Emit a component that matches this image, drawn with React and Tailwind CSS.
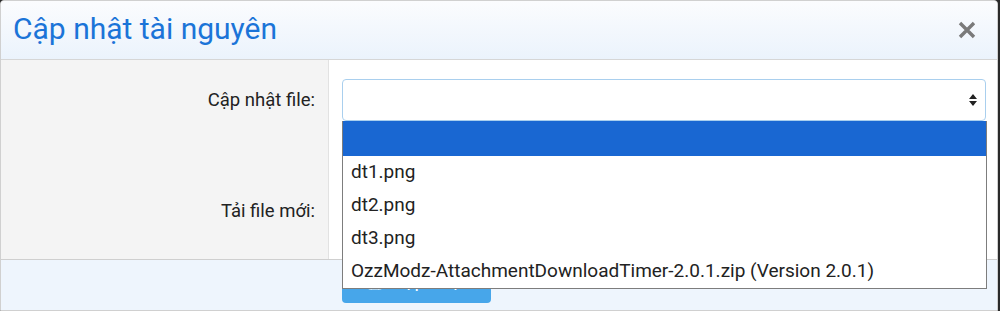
import { Save } from 'lucide-react'

const options = [
  { label: '', active: true },
  { label: 'dt1.png' },
  { label: 'dt2.png' },
  { label: 'dt3.png' },
  { label: 'OzzModz-AttachmentDownloadTimer-2.0.1.zip (Version 2.0.1)' },
]

export default function App() {
  return (
    <div className="w-[1000px] h-[311px] bg-[#2a2a2a] font-['Roboto','Liberation_Sans',sans-serif] text-[#222]">
      <div className="h-full mr-[2px] rounded-t-[4px] border border-[#d0d0d0] bg-white flex flex-col overflow-hidden">
        {/* Header */}
        <div className="h-[59px] shrink-0 flex items-center justify-between pl-[12px] pr-[20px] border-b border-[#d6d6d6] bg-gradient-to-b from-[#fbfcfe] to-[#ebf3fc]">
          <h2 className="text-[30px] text-[#1b74d8] leading-none pb-[2px]">Cập nhật tài nguyên</h2>
          <button className="text-[#7a7a7a]">
            <svg width="20" height="20" viewBox="0 0 20 20">
              <path d="M3 3 L17 17 M17 3 L3 17" stroke="currentColor" strokeWidth="3.4" strokeLinecap="butt" />
            </svg>
          </button>
        </div>

        {/* Body */}
        <div className="flex-1 flex">
          <div className="w-[328px] shrink-0 bg-[#f4f4f4] border-r border-[#e2e2e2] flex flex-col pr-[13px] text-[18.5px] text-right">
            <div className="h-[80px] pt-[27px]">Cập nhật file:</div>
            <div className="pt-[58px]">Tải file mới:</div>
          </div>
          <div className="flex-1 pl-[13px] pr-[11px] pt-[19px]">
            <div className="relative">
              <div className="h-[42px] rounded-[4px] border border-[#a9cfee] bg-white flex items-center justify-end pr-[7px]">
                <svg width="10" height="14" viewBox="0 0 10 14">
                  <path d="M5 1 L9 6 L1 6 Z M1 8 L9 8 L5 13 Z" fill="#222" />
                </svg>
              </div>
              <div className="absolute left-0 right-[-1px] top-[42px] z-10 bg-white border border-[#7d7d7d] border-t-0">
                {options.map((o, i) => (
                  <div
                    key={i}
                    className={`flex items-center pl-[8px] text-[19px] ${o.active ? 'h-[35px] bg-[#1967d2] text-white' : 'h-[33px] text-[#222]'}`}
                  >
                    {o.label}
                  </div>
                ))}
              </div>
            </div>
          </div>
        </div>

        {/* Footer */}
        <div className="h-[51px] shrink-0 border-t border-[#cfcfcf] bg-[#eef5fd] pl-[341px] pt-[6px]">
          <button className="h-[37px] w-[149px] rounded-[4px] bg-[#47a6ea] text-white text-[19px] flex items-center justify-center gap-2 pb-[6px]">
            <Save className="w-[18px] h-[18px]" />
            Cập nhật
          </button>
        </div>
      </div>
    </div>
  )
}
